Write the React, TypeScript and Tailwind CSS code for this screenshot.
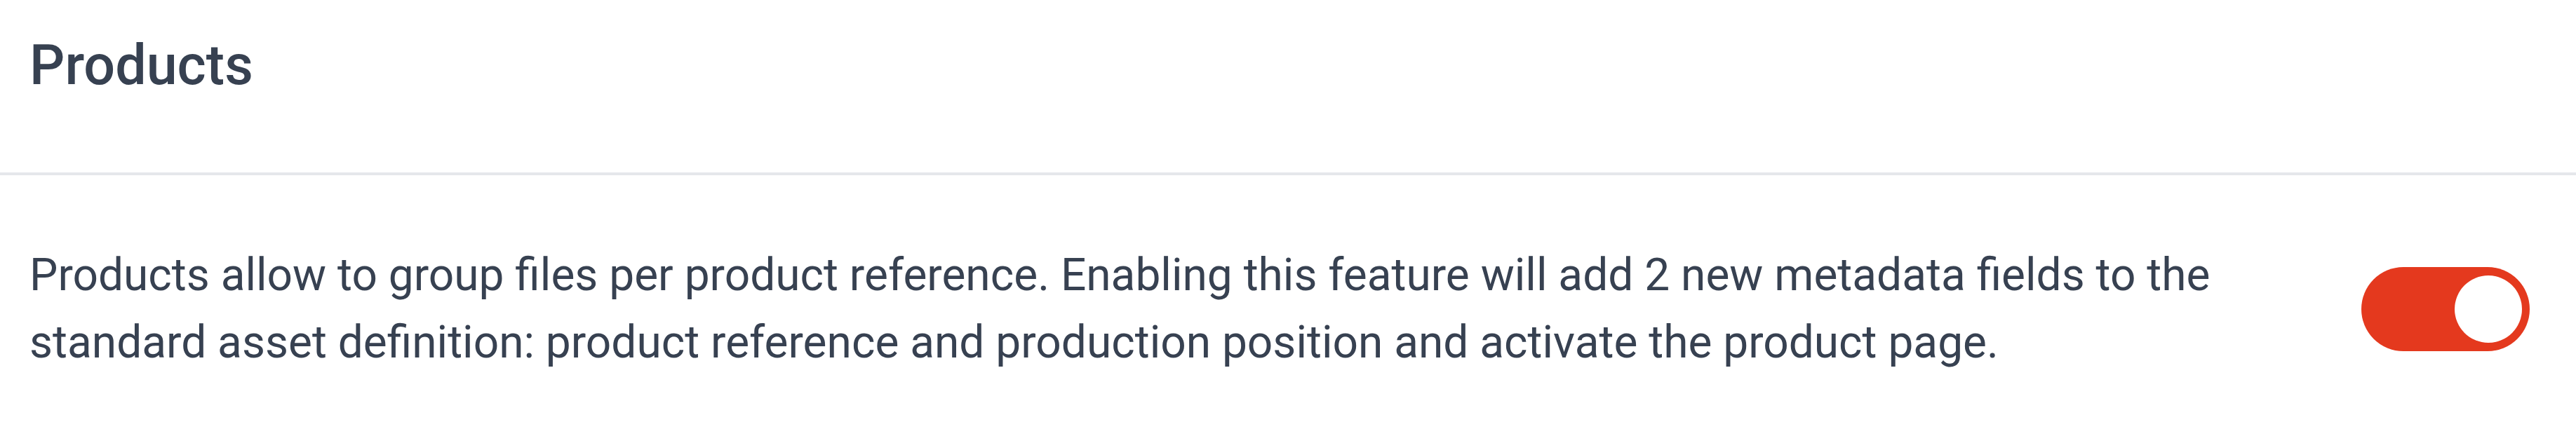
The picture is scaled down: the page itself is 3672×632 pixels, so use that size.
import React from 'react'

const App = () => {
  return (
    <div className="w-[3672px] h-[632px] bg-white text-[#374151]" style={{ fontFamily: 'Roboto, "Noto Sans", sans-serif' }}>
      <div className="h-[246px] pl-[42px] pt-[53px]">
        <h2 className="text-[79px] leading-[80px] font-medium">Products</h2>
      </div>
      <div className="h-[4px] bg-[#e5e7eb]" />
      <div className="flex h-[382px] items-center justify-between pl-[42px] pr-[66px]">
        <p className="max-w-[3200px] text-[64px] leading-[96px]">
          Products allow to group files per product reference. Enabling this feature will add 2 new metadata fields to the
          standard asset definition: product reference and production position and activate the product page.
        </p>
        <button className="flex h-[120px] w-[240px] shrink-0 items-center justify-end rounded-full bg-[#e4391e] pr-[11px]">
          <span className="h-[96px] w-[96px] rounded-full bg-white" />
        </button>
      </div>
    </div>
  )
}

export default App
